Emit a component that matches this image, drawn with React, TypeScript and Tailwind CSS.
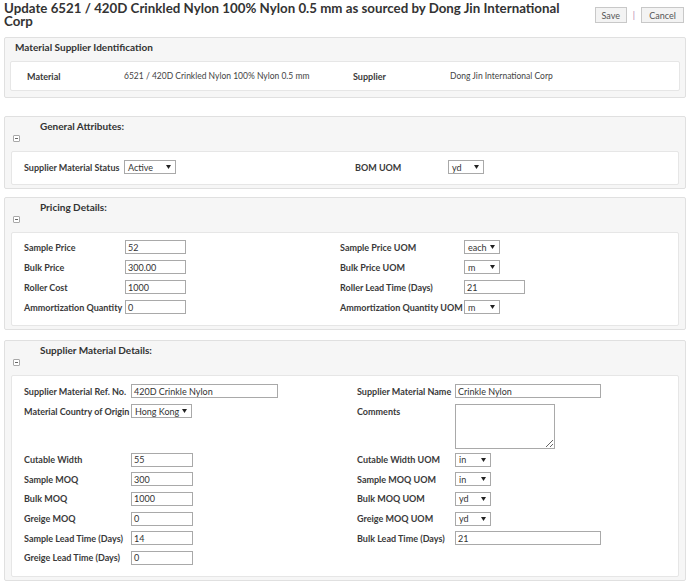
import React from 'react';

const font = { fontFamily: 'Lato, "Open Sans", "Liberation Sans", sans-serif' };

function Minus() {
  return (
    <span className="flex h-[7px] w-[7px] items-center justify-center rounded-[1px] border border-[#a8a8a8] bg-white">
      <span className="block h-px w-[3px] bg-[#666]" />
    </span>
  );
}

function Select({ value, w }: { value: string; w: string }) {
  return (
    <div className={`flex h-[14px] items-center justify-between border border-[#a9a9a9] bg-white pl-[3px] pr-[4px] text-[9px] text-[#333] ${w}`}>
      <span className="leading-none">{value}</span>
      <svg width="5" height="4" viewBox="0 0 5 4">
        <path d="M0 0 H5 L2.5 4 Z" fill="#222" />
      </svg>
    </div>
  );
}

function Input({ value, w }: { value: string; w: string }) {
  return (
    <div className={`flex h-[14px] items-center border border-[#a9a9a9] bg-white pl-[2px] text-[9px] leading-none text-[#333] ${w}`}>
      {value}
    </div>
  );
}

function Label({ children }: { children: React.ReactNode }) {
  return (
    <span className="flex h-[14px] items-center whitespace-nowrap text-[9px] font-bold leading-none text-[#3a3a3a]">
      {children}
    </span>
  );
}

function Panel({ title, children, className }: { title: string; children: React.ReactNode; className?: string }) {
  return (
    <div className={`mx-[4px] rounded-[2px] border border-[#e0e0e0] bg-[#f6f6f6] px-[6px] pb-[3px] ${className ?? ''}`}>
      <div className="h-[34px] pt-[3px]">
        <div className="pl-[29px] text-[10px] font-bold leading-[12px] text-[#333]">{title}</div>
        <div className="mt-[3px] pl-[2px]">
          <Minus />
        </div>
      </div>
      {children}
    </div>
  );
}

function Row({ cols, children, h = 'h-[20px]' }: { cols: string; children: React.ReactNode; h?: string }) {
  return <div className={`grid items-center ${cols} ${h}`}>{children}</div>;
}

export default function App() {
  const pricingCols = 'grid-cols-[101px_215px_124px_1fr]';
  const detailCols = 'grid-cols-[107px_226px_98px_1fr]';

  return (
    <div className="h-[584px] w-[690px] overflow-hidden bg-white" style={font}>
      {/* Header */}
      <div className="flex items-start justify-between pl-[4px] pr-[6px] pt-[2px]">
        <h1 className="w-[580px] text-[13.3px] font-bold leading-[13px] text-[#333]">
          Update 6521 / 420D Crinkled Nylon 100% Nylon 0.5 mm as sourced by Dong Jin International Corp
        </h1>
        <div className="mt-[5px] flex items-center gap-[6px] text-[9px] text-[#555]">
          <button className="h-[16px] w-[32px] border border-[#c8c8c8] bg-[#f3f3f3] leading-none">Save</button>
          <span className="text-[#b07ab0]">|</span>
          <button className="h-[16px] w-[43px] border border-[#c8c8c8] bg-[#f3f3f3] leading-none">Cancel</button>
        </div>
      </div>

      {/* Material Supplier Identification */}
      <div className="mx-[4px] mt-[9px] h-[61px] rounded-[2px] border border-[#e0e0e0] bg-[#f6f6f6] px-[5px]">
        <div className="h-[23px] pl-[5px] pt-[3px] text-[10px] font-bold leading-[12px] text-[#333]">
          Material Supplier Identification
        </div>
        <div className="grid h-[30px] grid-cols-[97px_229px_97px_1fr] items-center rounded-[2px] border border-[#e6e6e6] bg-white pl-[16px] text-[8.5px] text-[#444]">
          <Label>Material</Label>
          <span>6521 / 420D Crinkled Nylon 100% Nylon 0.5 mm</span>
          <Label>Supplier</Label>
          <span>Dong Jin International Corp</span>
        </div>
      </div>

      {/* General Attributes */}
      <Panel title="General Attributes:" className="mt-[18px]">
        <div className="h-[34px] rounded-[2px] border border-[#e6e6e6] bg-white pl-[12px] pt-[8px]">
          <Row cols="grid-cols-[100px_231px_93px_1fr]" h="h-[14px]">
            <Label>Supplier Material Status</Label>
            <Select value="Active" w="w-[52px]" />
            <Label>BOM UOM</Label>
            <Select value="yd" w="w-[36px]" />
          </Row>
        </div>
      </Panel>

      {/* Pricing Details */}
      <Panel title="Pricing Details:" className="mt-[8px]">
        <div className="rounded-[2px] border border-[#e6e6e6] bg-white pb-[8px] pl-[12px] pt-[4px]">
          <Row cols={pricingCols}>
            <Label>Sample Price</Label>
            <Input value="52" w="w-[61px]" />
            <Label>Sample Price UOM</Label>
            <Select value="each" w="w-[36px]" />
          </Row>
          <Row cols={pricingCols}>
            <Label>Bulk Price</Label>
            <Input value="300.00" w="w-[61px]" />
            <Label>Bulk Price UOM</Label>
            <Select value="m" w="w-[36px]" />
          </Row>
          <Row cols={pricingCols}>
            <Label>Roller Cost</Label>
            <Input value="1000" w="w-[61px]" />
            <Label>Roller Lead Time (Days)</Label>
            <Input value="21" w="w-[61px]" />
          </Row>
          <Row cols={pricingCols}>
            <Label>Ammortization Quantity</Label>
            <Input value="0" w="w-[61px]" />
            <Label>Ammortization Quantity UOM</Label>
            <Select value="m" w="w-[36px]" />
          </Row>
        </div>
      </Panel>

      {/* Supplier Material Details */}
      <Panel title="Supplier Material Details:" className="mt-[10px]">
        <div className="rounded-[2px] border border-[#e6e6e6] bg-white pb-[8px] pl-[12px] pt-[5px]">
          <Row cols={detailCols}>
            <Label>Supplier Material Ref. No.</Label>
            <Input value="420D Crinkle Nylon" w="w-[147px]" />
            <Label>Supplier Material Name</Label>
            <Input value="Crinkle Nylon" w="w-[146px]" />
          </Row>
          <div className={`grid h-[49px] content-start items-start pt-[3px] ${detailCols}`}>
            <Label>Material Country of Origin</Label>
            <Select value="Hong Kong" w="w-[61px]" />
            <Label>Comments</Label>
            <textarea
              readOnly
              className="h-[45px] w-[100px] resize border border-[#a9a9a9] bg-white"
            />
          </div>
          <Row cols={detailCols} h="h-[19.6px]">
            <Label>Cutable Width</Label>
            <Input value="55" w="w-[62px]" />
            <Label>Cutable Width UOM</Label>
            <Select value="in" w="w-[36px]" />
          </Row>
          <Row cols={detailCols} h="h-[19.6px]">
            <Label>Sample MOQ</Label>
            <Input value="300" w="w-[62px]" />
            <Label>Sample MOQ UOM</Label>
            <Select value="in" w="w-[36px]" />
          </Row>
          <Row cols={detailCols} h="h-[19.6px]">
            <Label>Bulk MOQ</Label>
            <Input value="1000" w="w-[62px]" />
            <Label>Bulk MOQ UOM</Label>
            <Select value="yd" w="w-[36px]" />
          </Row>
          <Row cols={detailCols} h="h-[19.6px]">
            <Label>Greige MOQ</Label>
            <Input value="0" w="w-[62px]" />
            <Label>Greige MOQ UOM</Label>
            <Select value="yd" w="w-[36px]" />
          </Row>
          <Row cols={detailCols} h="h-[19.6px]">
            <Label>Sample Lead Time (Days)</Label>
            <Input value="14" w="w-[62px]" />
            <Label>Bulk Lead Time (Days)</Label>
            <Input value="21" w="w-[146px]" />
          </Row>
          <Row cols={detailCols} h="h-[19.6px]">
            <Label>Greige Lead Time (Days)</Label>
            <Input value="0" w="w-[62px]" />
            <span />
            <span />
          </Row>
        </div>
      </Panel>
    </div>
  );
}
